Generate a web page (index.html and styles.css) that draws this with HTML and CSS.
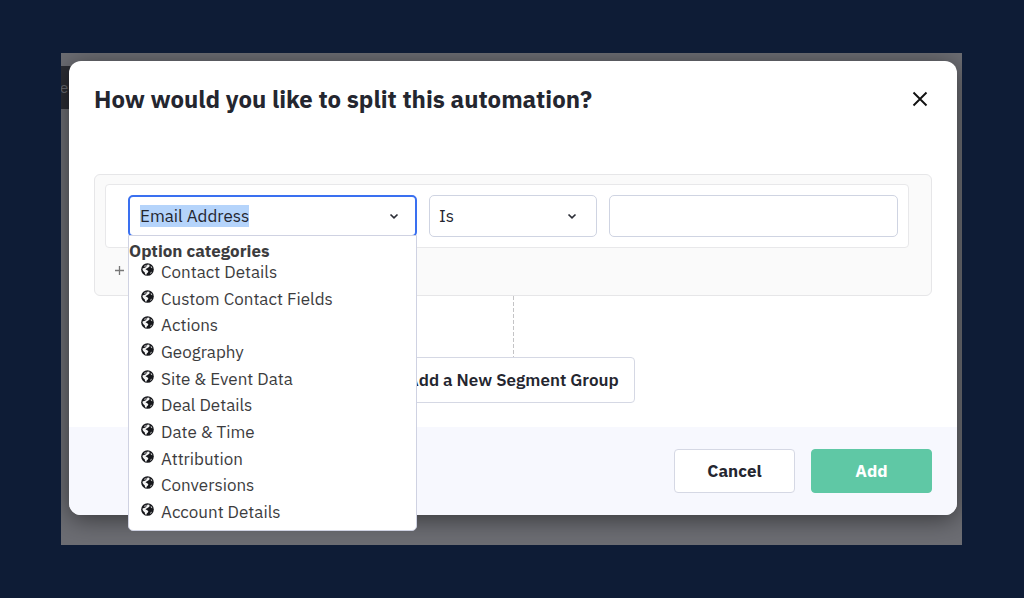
FILE: index.html
```html
<!DOCTYPE html>
<html lang="en">
<head>
<meta charset="utf-8">
<meta name="viewport" content="width=device-width, initial-scale=1">
<title>Split automation</title>
<link rel="stylesheet" href="styles.css">
</head>
<body>
<svg class="sprite" aria-hidden="true">
  <symbol id="globe" viewBox="0 0 14 14">
    <circle cx="7" cy="7" r="6.8" fill="#15161a"/>
    <path fill="#8b8b8d" d="M3.4 2.9 5.4 1.8 6.6 2.2 5 4 3.1 4.6z"/>
    <path fill="#f4f4f4" d="M7.2 1.7 9 1.9 9.3 3.4 8.2 4.6 7 5.4 5.6 6.1 4.9 7 6.4 7.6 7.9 8.8 7.4 10.3 6.2 11.2 5.8 12.6 4.3 12 4.1 10.2 2.6 9 1.6 7.4 1.9 5.6 3.6 5.5 5.2 4.6z"/>
    <path fill="#c9c9c9" d="M10.6 3 11.8 4.2 12.3 5.6 11.2 5.3 10.4 4.4zM10.6 9.8 11.9 9.5 10.9 11.1 9.6 11.9z"/>
  </symbol>
  <symbol id="chevron" viewBox="0 0 10 10">
    <path d="M1.5 3.5 5 6.8 8.5 3.5" fill="none" stroke="#2b2d36" stroke-width="1.7"/>
  </symbol>
</svg>
<div class="stage">
  <div class="toolbar">er</div>
  <main class="modal" role="dialog" aria-labelledby="modal-title">
    <header class="modal-header">
      <h1 id="modal-title">How would you like to split this automation?</h1>
      <button class="close" type="button" aria-label="Close">
        <svg viewBox="0 0 16 16"><path d="M1.5 1.5 14.5 14.5M14.5 1.5 1.5 14.5" stroke="#111" stroke-width="1.9" fill="none"/></svg>
      </button>
    </header>
    <div class="modal-body">
      <section class="group">
        <div class="condition">
          <div class="combo">
            <div class="field combo-field">
              <input class="combo-input" type="text" value="Email Address" size="12" aria-label="Condition field">
              <svg class="chevron"><use href="#chevron"/></svg>
            </div>
            <div class="menu">
              <h2>Option categories</h2>
              <ul>
                <li><svg><use href="#globe"/></svg>Contact Details</li>
                <li><svg><use href="#globe"/></svg>Custom Contact Fields</li>
                <li><svg><use href="#globe"/></svg>Actions</li>
                <li><svg><use href="#globe"/></svg>Geography</li>
                <li><svg><use href="#globe"/></svg>Site &amp; Event Data</li>
                <li><svg><use href="#globe"/></svg>Deal Details</li>
                <li><svg><use href="#globe"/></svg>Date &amp; Time</li>
                <li><svg><use href="#globe"/></svg>Attribution</li>
                <li><svg><use href="#globe"/></svg>Conversions</li>
                <li><svg><use href="#globe"/></svg>Account Details</li>
              </ul>
            </div>
          </div>
          <div class="operator">
            <select class="field" aria-label="Operator"><option>Is</option></select>
            <svg class="chevron"><use href="#chevron"/></svg>
          </div>
          <input class="field value" type="text" aria-label="Value">
        </div>
        <button class="add-condition" type="button" aria-label="Add condition">
          <svg viewBox="0 0 9 9"><path d="M4.5 0V9M0 4.5H9" stroke="#777" stroke-width="1.3"/></svg>
        </button>
      </section>
      <div class="connector"></div>
      <button class="button add-group" type="button">Add a New Segment Group</button>
    </div>
    <footer class="modal-footer">
      <button class="button" type="button">Cancel</button>
      <button class="button primary" type="button">Add</button>
    </footer>
  </main>
</div>
</body>
</html>
```
FILE: styles.css
```css
* { box-sizing: border-box; }

body {
  margin: 0;
  padding: 53px 62px 53px 61px;
  background: #0e1c36;
  color: #24262f;
  font-family: "IBM Plex Sans", Roboto, sans-serif;
  font-size: 17px;
  line-height: 22px;
}

button, input, select { font: inherit; color: inherit; }

.sprite { position: absolute; width: 0; height: 0; }

.stage {
  position: relative;
  padding: 8px 5px 30px 8px;
  background: #6c6d73;
  overflow: hidden;
}

/* Page header dimmed behind the dialog */
.toolbar {
  position: absolute;
  top: 13px;
  left: 0;
  width: 40px;
  height: 43px;
  background: #2b2d34;
  color: #696b72;
  font-size: 15px;
  line-height: 43px;
  text-indent: -1px;
}

.modal {
  position: relative;
  border-radius: 12px;
  background: #fff;
  box-shadow: 0 4px 24px rgba(0, 0, 0, .5);
}

.modal-header {
  display: flex;
  align-items: center;
  justify-content: space-between;
  padding: 22px 29px 22px 25px;
}

h1 {
  margin: 0;
  font-size: 24px;
  line-height: 32px;
  font-weight: 700;
}

.close {
  display: flex;
  padding: 0;
  border: 0;
  background: none;
}

.close svg { width: 16px; height: 16px; }

.modal-body {
  display: flex;
  flex-direction: column;
  align-items: center;
  padding: 37px 25px 24px;
}

.group {
  align-self: stretch;
  padding: 9px 22px 10px 10px;
  border: 1px solid #e6e6e8;
  border-radius: 6px;
  background: #fafafa;
}

.condition {
  display: grid;
  grid-template-columns: 289fr 168fr 289fr;
  gap: 12px;
  padding: 10px 10px 10px 22px;
  border: 1px solid #e8e8ea;
  border-radius: 4px;
  background: #fff;
}

.combo { position: relative; }

.field {
  width: 100%;
  height: 42px;
  padding: 0 9px;
  border: 1px solid #cfd4e2;
  border-radius: 5px;
  background: #fff;
}

.combo-field {
  display: flex;
  align-items: center;
  justify-content: space-between;
  padding: 0 16px 0 10px;
  border: 2px solid #3a70f0;
}

.combo-input {
  field-sizing: content;
  height: 22px;
  padding: 0;
  border: 0;
  background: #b5d4fb;
}

.chevron { width: 10px; height: 10px; }

.operator { display: grid; align-items: center; }
.operator > * { grid-area: 1 / 1; }
.operator select { appearance: none; }

.operator .chevron {
  justify-self: end;
  margin-right: 20px;
  pointer-events: none;
}

.menu {
  position: absolute;
  top: 40px;
  left: 0;
  right: 0;
  padding: 6px 0 7px;
  border: 1px solid #cfd2e2;
  border-radius: 0 0 5px 5px;
  background: #fff;
  color: #3c3c3e;
  z-index: 1;
}

.menu h2 {
  margin: 0;
  font-size: 17px;
  line-height: 19px;
}

.menu ul {
  display: grid;
  align-content: space-between;
  min-height: 262px;
  margin: 0;
  padding: 0;
  list-style: none;
}

.menu li {
  display: flex;
  gap: 7px;
  padding-left: 12px;
}

.menu li svg { width: 13px; height: 13px; margin-top: 2px; }

.add-condition {
  display: flex;
  margin: 18px 0 10px 10px;
  padding: 0;
  border: 0;
  background: none;
}

.add-condition svg { width: 9px; height: 9px; }

.connector {
  width: 1px;
  height: 61px;
  background: repeating-linear-gradient(#c4c4c6 0 4px, transparent 4px 6px);
}

.button {
  min-width: 121px;
  padding: 10px 15px;
  border: 1px solid #d5d8e4;
  border-radius: 4px;
  background: #fff;
  font-weight: 700;
}

.add-group {
  min-width: 240px;
  padding: 11px 15px;
  font-weight: 600;
}

.modal-footer {
  display: flex;
  justify-content: flex-end;
  gap: 16px;
  padding: 22px 25px;
  border-radius: 0 0 12px 12px;
  background: #f7f8fe;
}

.primary {
  border-color: #5fc8a5;
  background: #5fc8a5;
  color: #fff;
}
```
